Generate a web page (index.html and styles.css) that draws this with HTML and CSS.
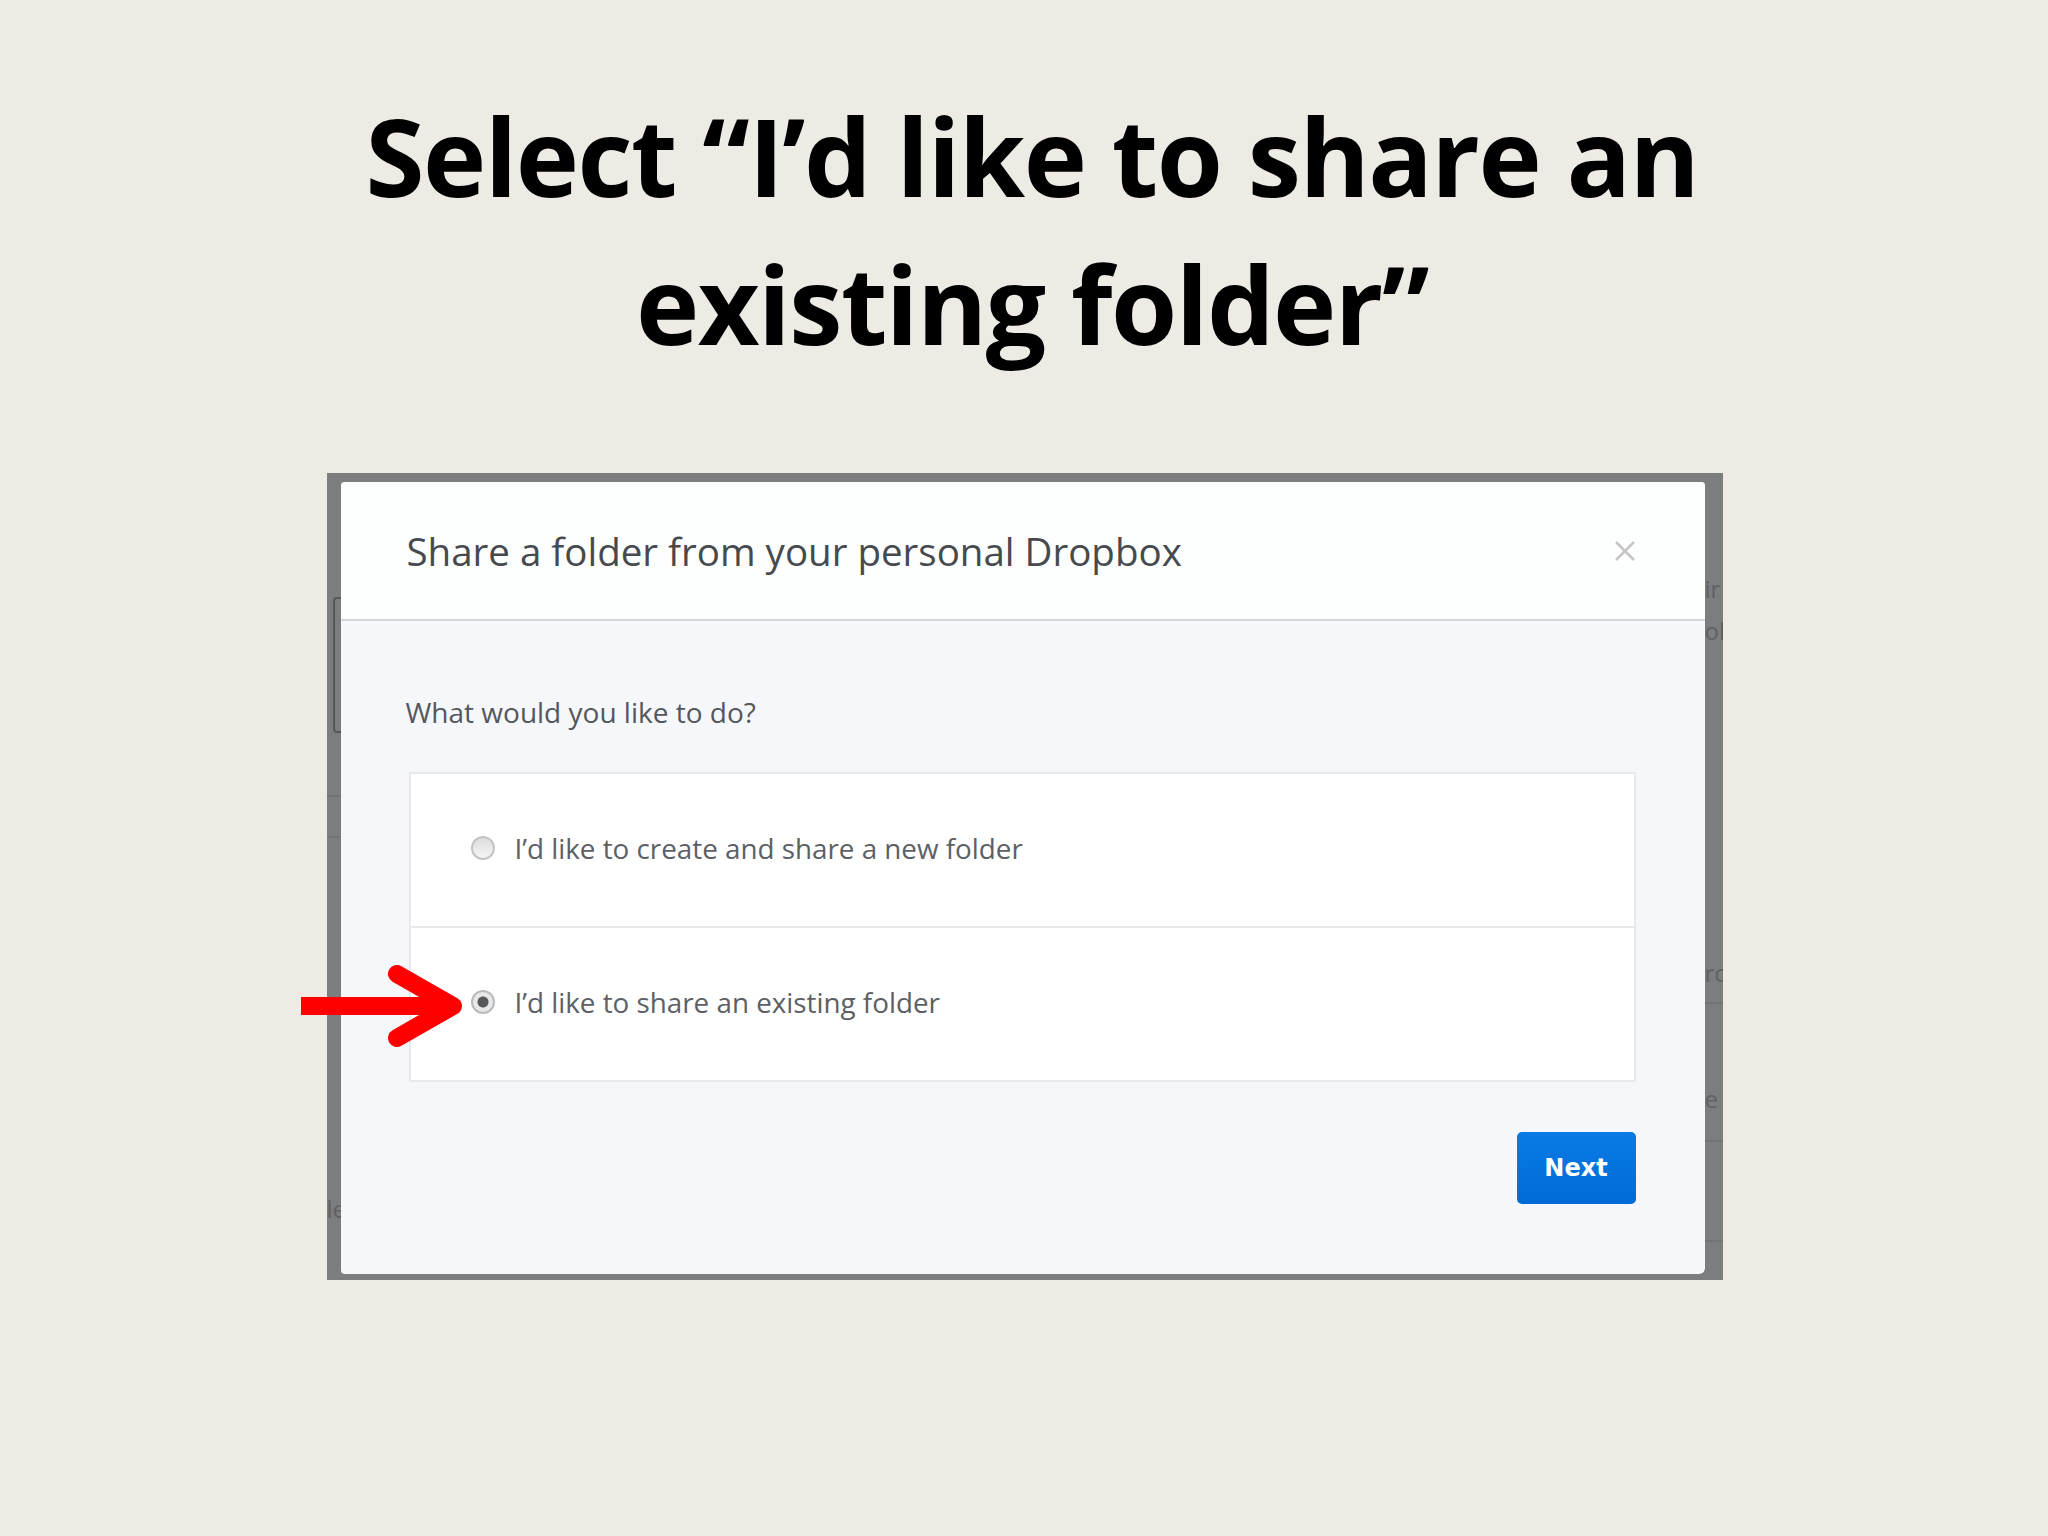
FILE: index.html
```html
<!DOCTYPE html>
<html>

<head>
    <title>Share an existing folder</title>
    <link rel="stylesheet" href="styles.css">
</head>

<body>
    <div class="slide">
        <h1 class="slide-title">Select “I’d like to share an<br>existing folder”</h1>

        <div class="shot">
            <!-- dimmed page behind the dialog -->
            <span class="ghost ghost-box"></span>
            <span class="ghost ghost-line" style="top: 322px;"></span>
            <span class="ghost ghost-line" style="top: 363px;"></span>
            <span class="ghost ghost-line right" style="top: 529px;"></span>
            <span class="ghost ghost-line right" style="top: 667px;"></span>
            <span class="ghost ghost-line right" style="top: 767px;"></span>
            <span class="ghost ghost-text right" style="top: 104px;">ir</span>
            <span class="ghost ghost-text right" style="top: 146px;">ol</span>
            <span class="ghost ghost-text right" style="top: 488px;">rc</span>
            <span class="ghost ghost-text right" style="top: 614px;">e</span>
            <span class="ghost ghost-text" style="top: 724px;">le</span>

            <div class="modal">
                <div class="modal-head">
                    <h2 class="modal-title">Share a folder from your personal Dropbox</h2>
                    <span class="close">
                        <svg width="24" height="24" viewBox="0 0 24 24">
                            <path d="M3 3 L21 21 M21 3 L3 21" stroke="#c6c6c8" stroke-width="2.6" fill="none"/>
                        </svg>
                    </span>
                </div>
                <div class="modal-body">
                    <p class="question">What would you like to do?</p>
                    <div class="options">
                        <label class="option"><span class="radio"></span>I’d like to create and share a new folder</label>
                        <label class="option"><span class="radio on"></span>I’d like to share an existing folder</label>
                    </div>
                    <div class="actions">
                        <button class="btn">Next</button>
                    </div>
                </div>
            </div>

            <svg class="pointer" width="196" height="96" viewBox="0 0 196 96">
                <rect x="10" y="37" width="146" height="18" fill="#ff0000"/>
                <polyline points="106,14 162,46 106,78" fill="none" stroke="#ff0000" stroke-width="18"
                    stroke-linecap="round" stroke-linejoin="round"/>
            </svg>
        </div>
    </div>
</body>

</html>
```

FILE: styles.css
```css
* {
    margin: 0;
    padding: 0;
    box-sizing: border-box;
}

body {
    background-color: #eeebe4;
    font-family: "Open Sans", "Noto Sans", sans-serif;
}

.slide {
    width: 2048px;
    height: 1536px;
    display: flex;
    flex-direction: column;
    align-items: center;
}

.slide-title {
    margin-top: 82px;
    margin-left: 16px;
    font-family: "Open Sans", "Noto Sans", sans-serif;
    font-weight: 700;
    font-size: 107px;
    line-height: 148px;
    letter-spacing: -1.5px;
    color: #000;
    text-align: center;
}

.shot {
    position: relative;
    width: 1396px;
    height: 807px;
    margin-top: 95px;
    margin-left: 1px;
    padding: 9px 18px 6px 14px;
    background-color: #7b7d7e;
}

.ghost {
    position: absolute;
    left: 0;
}

.ghost.right {
    left: auto;
    right: 0;
}

.ghost-box {
    top: 124px;
    left: 6px;
    width: 20px;
    height: 136px;
    border: 2px solid #55585a;
    border-radius: 4px;
}

.ghost-line {
    width: 18px;
    height: 2px;
    background-color: #727475;
}

.ghost-text {
    font-size: 24px;
    line-height: 24px;
    color: #5f6163;
    width: 18px;
    overflow: hidden;
    white-space: nowrap;
}

.modal {
    position: relative;
    height: 100%;
    display: flex;
    flex-direction: column;
    background-color: #f6f7fa;
    border-radius: 4px 4px 6px 4px;
    overflow: hidden;
}

.modal-head {
    height: 139px;
    display: flex;
    align-items: center;
    justify-content: space-between;
    padding: 0 68px 0 66px;
    background-color: #fdfefe;
    border-bottom: 2px solid #d3d5d9;
}

.modal-title {
    font-weight: 400;
    font-size: 38.5px;
    color: #464a4f;
}

.close {
    display: flex;
}

.modal-body {
    flex: 1;
    padding: 71px 69px 0 68px;
}

.question {
    margin-left: -3px;
    font-size: 28px;
    line-height: 40px;
    color: #54585d;
}

.options {
    margin-top: 40px;
    background-color: #fff;
    border: 2px solid #e7e9ec;
}

.option {
    height: 152px;
    display: flex;
    align-items: center;
    padding-left: 60px;
    padding-bottom: 5px;
    font-size: 27.8px;
    color: #5c6065;
}

.option + .option {
    height: 154px;
    border-top: 2px solid #e7e9ec;
}

.radio {
    width: 24px;
    height: 24px;
    margin-right: 20px;
    border-radius: 50%;
    border: 2px solid #c2c3c5;
    background: linear-gradient(#dcdcde, #f6f6f7);
}

.radio.on {
    border-color: #b9babc;
    background: radial-gradient(circle, #56585b 0, #56585b 5px, #e7e8ea 6px);
}

.actions {
    display: flex;
    justify-content: flex-end;
    margin-top: 50px;
}

.btn {
    width: 119px;
    height: 72px;
    border: none;
    border-radius: 5px;
    background: linear-gradient(#0a7be4, #006bd6);
    color: #fff;
    font-family: "DejaVu Sans", sans-serif;
    font-weight: 700;
    font-size: 24px;
}

.pointer {
    position: absolute;
    left: -36px;
    top: 487px;
}
```
